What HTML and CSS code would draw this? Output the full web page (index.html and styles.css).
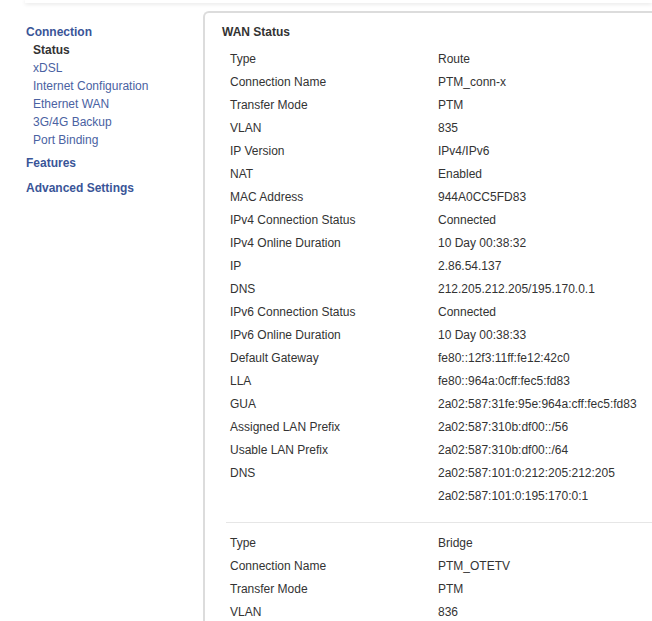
FILE: index.html
```html
<!DOCTYPE html>
<html lang="en">
<head>
    <meta charset="UTF-8">
    <title>WAN Status</title>
    <link rel="stylesheet" href="styles.css">
</head>
<body>
    <div class="topbar"></div>
    <div class="page">
        <div class="sidebar">
            <div class="menu-group">
                <a href="#" class="menu-title">Connection</a>
                <ul>
                    <li><a href="#" class="menu-item active">Status</a></li>
                    <li><a href="#" class="menu-item">xDSL</a></li>
                    <li><a href="#" class="menu-item">Internet Configuration</a></li>
                    <li><a href="#" class="menu-item">Ethernet WAN</a></li>
                    <li><a href="#" class="menu-item">3G/4G Backup</a></li>
                    <li><a href="#" class="menu-item">Port Binding</a></li>
                </ul>
            </div>
            <div class="menu-group features">
                <a href="#" class="menu-title">Features</a>
            </div>
            <div class="menu-group">
                <a href="#" class="menu-title">Advanced Settings</a>
            </div>
        </div>
        <div class="panel">
            <h2 class="panel-title">WAN Status</h2>
            <div class="wan">
                <table class="info">
                    <tr><td class="label">Type</td><td>Route</td></tr>
                    <tr><td class="label">Connection Name</td><td>PTM_conn-x</td></tr>
                    <tr><td class="label">Transfer Mode</td><td>PTM</td></tr>
                    <tr><td class="label">VLAN</td><td>835</td></tr>
                    <tr><td class="label">IP Version</td><td>IPv4/IPv6</td></tr>
                    <tr><td class="label">NAT</td><td>Enabled</td></tr>
                    <tr><td class="label">MAC Address</td><td>944A0CC5FD83</td></tr>
                    <tr><td class="label">IPv4 Connection Status</td><td>Connected</td></tr>
                    <tr><td class="label">IPv4 Online Duration</td><td>10 Day 00:38:32</td></tr>
                    <tr><td class="label">IP</td><td>2.86.54.137</td></tr>
                    <tr><td class="label">DNS</td><td>212.205.212.205/195.170.0.1</td></tr>
                    <tr><td class="label">IPv6 Connection Status</td><td>Connected</td></tr>
                    <tr><td class="label">IPv6 Online Duration</td><td>10 Day 00:38:33</td></tr>
                    <tr><td class="label">Default Gateway</td><td>fe80::12f3:11ff:fe12:42c0</td></tr>
                    <tr><td class="label">LLA</td><td>fe80::964a:0cff:fec5:fd83</td></tr>
                    <tr><td class="label">GUA</td><td>2a02:587:31fe:95e:964a:cff:fec5:fd83</td></tr>
                    <tr><td class="label">Assigned LAN Prefix</td><td>2a02:587:310b:df00::/56</td></tr>
                    <tr><td class="label">Usable LAN Prefix</td><td>2a02:587:310b:df00::/64</td></tr>
                    <tr><td class="label">DNS</td><td>2a02:587:101:0:212:205:212:205</td></tr>
                    <tr><td class="label"></td><td>2a02:587:101:0:195:170:0:1</td></tr>
                </table>
            </div>
            <div class="wan">
                <table class="info">
                    <tr><td class="label">Type</td><td>Bridge</td></tr>
                    <tr><td class="label">Connection Name</td><td>PTM_OTETV</td></tr>
                    <tr><td class="label">Transfer Mode</td><td>PTM</td></tr>
                    <tr><td class="label">VLAN</td><td>836</td></tr>
                </table>
            </div>
        </div>
    </div>
</body>
</html>
```

FILE: styles.css
```css
body {
    margin: 0;
    padding: 0;
    background-color: white;
    font-family: "Liberation Sans", Arial, sans-serif;
    font-size: 12px;
    color: #333;
    overflow: hidden;
}
.topbar {
    height: 3px;
    margin-left: 25px;
    background-color: white;
    box-shadow: 0 1px 4px rgba(0, 0, 0, 0.12);
}
.page {
    display: flex;
    align-items: flex-start;
}
.sidebar {
    width: 177px;
    flex-shrink: 0;
    padding: 20px 0 0 26px;
}
.menu-group {
    margin-bottom: 5px;
}
.menu-group.features {
    margin-bottom: 7px;
}
.menu-title {
    display: block;
    line-height: 18px;
    font-weight: bold;
    color: #3a5598;
    text-decoration: none;
}
.menu-group ul {
    list-style: none;
    margin: 0;
    padding: 0 0 0 7px;
}
.menu-item {
    display: block;
    line-height: 18px;
    color: #4a62a2;
    text-decoration: none;
}
.menu-item.active {
    font-weight: bold;
    color: #333;
}
.panel {
    flex: 1;
    margin-top: 8px;
    margin-right: -20px;
    min-height: 700px;
    padding: 9px 0 0 17px;
    border-top: 2px solid #dcdcdc;
    border-left: 2px solid #dcdcdc;
    border-top-left-radius: 6px;
}
.panel-title {
    margin: 0;
    font-size: 12px;
    line-height: 20px;
    font-weight: bold;
    color: #333;
}
.wan {
    margin-left: 4px;
    padding: 5px 0 15px 0;
}
.wan + .wan {
    border-top: 1px solid #e6e6e6;
    padding-top: 8px;
}
.info {
    border-collapse: collapse;
}
.info td {
    height: 23px;
    padding: 0 0 0 4px;
    white-space: nowrap;
    vertical-align: middle;
}
.info td.label {
    width: 204px;
}
```
